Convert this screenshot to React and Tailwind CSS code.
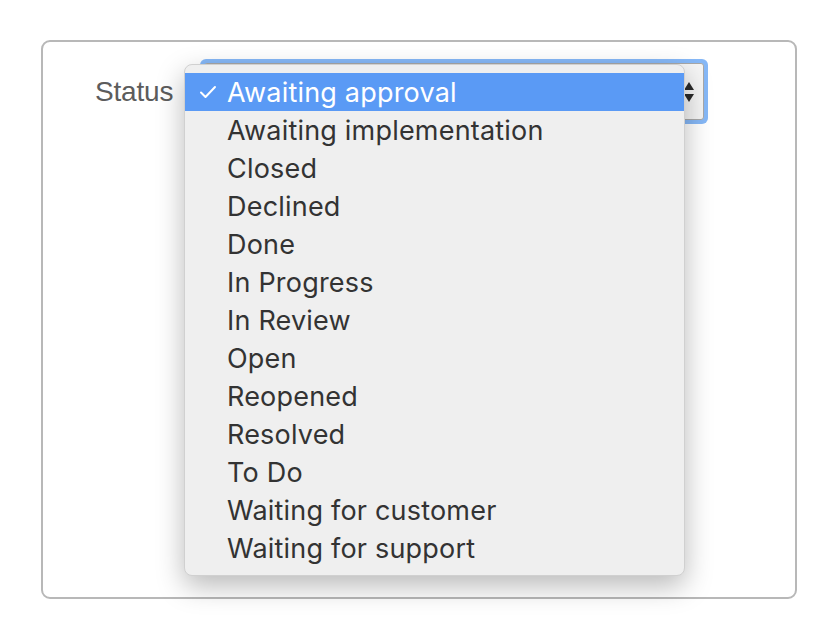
import React from "react";

const items = [
  "Awaiting approval",
  "Awaiting implementation",
  "Closed",
  "Declined",
  "Done",
  "In Progress",
  "In Review",
  "Open",
  "Reopened",
  "Resolved",
  "To Do",
  "Waiting for customer",
  "Waiting for support",
];

export default function App() {
  return (
    <div className="w-[839px] h-[639px] bg-white pt-[40px] pl-[41px]">
      <div className="w-[756px] h-[559px] border-2 border-[#b8b8b8] rounded-[9px] pt-[17px] pl-[52px]">
        <div className="flex items-center">
          <div
            className="text-[28px] text-[#5c5c5c] leading-none w-[105px] tracking-[-0.2px]"
            style={{ fontFamily: '"Liberation Sans", Arial, sans-serif' }}
          >
            Status
          </div>
          <div className="relative">
            <div className="w-[508px] h-[65px] rounded-[6px] bg-[#86b8f7] p-[4px]">
              <div className="w-full h-full rounded-[3px] border border-[#a8a8a8] bg-[#f5f5f5] flex items-center justify-end pr-[9px]">
                <svg width="10" height="22" viewBox="0 0 10 22">
                  <path d="M5 1 L10 9 L0 9 Z" fill="#2a2a2a" />
                  <path d="M0 13 L10 13 L5 21 Z" fill="#2a2a2a" />
                </svg>
              </div>
            </div>
            <div
              className="absolute left-[-16px] top-[5px] w-[501px] bg-[#efefef] rounded-[8px] py-[8px] border border-[#d0d0d0] shadow-[0_10px_28px_rgba(0,0,0,0.28)]"
              style={{ fontFamily: 'Inter, "Noto Sans", sans-serif' }}
            >
              {items.map((it, i) => (
                <div
                  key={it}
                  className={
                    "h-[38px] flex items-center text-[27px] leading-none " +
                    (i === 0 ? "bg-[#5a9af5] text-white" : "text-[#333333]")
                  }
                >
                  <div className="w-[42px] flex justify-end pr-[10px]">
                    {i === 0 && (
                      <svg width="18" height="14" viewBox="0 0 18 14">
                        <path
                          d="M2 7.5 L6.5 12 L16 2"
                          fill="none"
                          stroke="white"
                          strokeWidth="2"
                          strokeLinecap="round"
                          strokeLinejoin="round"
                        />
                      </svg>
                    )}
                  </div>
                  <span className="tracking-[0.2px]">{it}</span>
                </div>
              ))}
            </div>
          </div>
        </div>
      </div>
    </div>
  );
}
